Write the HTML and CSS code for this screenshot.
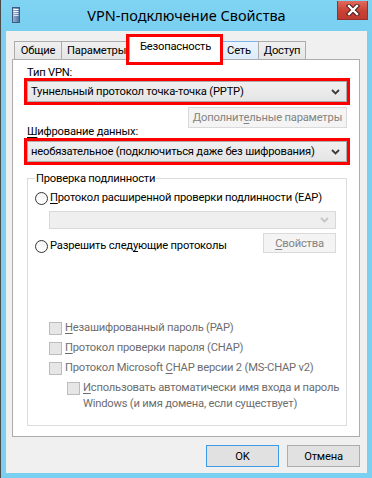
FILE: index.html
```html
<!DOCTYPE html>
<html lang="ru">
<head>
<meta charset="utf-8">
<title>VPN-подключение Свойства</title>
<link rel="stylesheet" href="styles.css">
</head>
<body>
<div class="window">
  <div class="titlebar">
    <div class="app-icon">
      <svg width="8" height="16" viewBox="0 0 8 16">
        <defs><linearGradient id="ig" x1="0" x2="1"><stop offset="0" stop-color="#9fb8d6"/><stop offset="1" stop-color="#4f6f9a"/></linearGradient></defs>
        <rect x="0.5" y="0.5" width="7" height="15" fill="url(#ig)" stroke="#3f5a80" stroke-width="1"/>
        <rect x="1.5" y="2" width="5" height="1" fill="#ffffff"/>
        <rect x="1.5" y="4" width="5" height="1" fill="#ffffff"/>
        <rect x="1.5" y="6" width="5" height="1" fill="#e8eef6"/>
        <rect x="1.5" y="8" width="5" height="1" fill="#dfe7f1"/>
      </svg>
    </div>
    <div class="title">VPN-подключение Свойства</div>
    <div class="close-wrap">
      <div class="close">
        <svg width="14" height="12" viewBox="0 0 14 12">
          <path d="M3 2 L11 10 M11 2 L3 10" stroke="#4a1a16" stroke-width="4.4" stroke-linecap="square"/>
          <path d="M3 2 L11 10 M11 2 L3 10" stroke="#ffffff" stroke-width="2.4" stroke-linecap="square"/>
        </svg>
      </div>
    </div>
  </div>

  <div class="client">
    <div class="tabs">
      <div class="tab tab-general">Общие</div>
      <div class="tab tab-params">Параметры</div>
      <div class="tab tab-active">Безопасность<span class="mark"></span></div>
      <div class="tab tab-hover">Сеть</div>
      <div class="tab tab-access">Доступ</div>
    </div>

    <div class="panel">
      <div class="label label-first"><u>Т</u>ип VPN:</div>
      <div class="combo marked">
        <span class="combo-text">Туннельный протокол точка-точка (PPTP)</span>
        <svg class="chev" width="9" height="6" viewBox="0 0 9 6"><path d="M1 1 L4.5 4.5 L8 1" fill="none" stroke="#3c3c3c" stroke-width="1.8"/></svg>
      </div>
      <div class="row-right">
        <div class="btn btn-disabled btn-extra">Дополнит<u>е</u>льные параметры</div>
      </div>
      <div class="label label-second"><u>Ш</u>ифрование данных:</div>
      <div class="combo marked">
        <span class="combo-text">необязательное (подключиться даже без шифрования)</span>
        <svg class="chev" width="9" height="6" viewBox="0 0 9 6"><path d="M1 1 L4.5 4.5 L8 1" fill="none" stroke="#3c3c3c" stroke-width="1.8"/></svg>
      </div>

      <fieldset class="group">
        <legend>Проверка подлинности</legend>
        <div class="radio-row">
          <span class="radio"></span>
          <span class="radio-text"><u>П</u>ротокол расширенной проверки подлинности (EAP)</span>
        </div>
        <div class="combo combo-disabled">
          <span class="combo-text"></span>
          <svg class="chev" width="9" height="6" viewBox="0 0 9 6"><path d="M1 1 L4.5 4.5 L8 1" fill="none" stroke="#c4c4c4" stroke-width="1.8"/></svg>
        </div>
        <div class="radio-row radio-row2">
          <span class="radio"></span>
          <span class="radio-text">Разрешить след<u>у</u>ющие протоколы</span>
          <div class="btn btn-disabled btn-props"><u>С</u>войства</div>
        </div>

        <div class="checks">
          <div class="check-row">
            <span class="checkbox"></span>
            <span class="check-text"><u>Н</u>езашифрованный пароль (PAP)</span>
          </div>
          <div class="check-row">
            <span class="checkbox"></span>
            <span class="check-text"><u>П</u>ротокол проверки пароля (CHAP)</span>
          </div>
          <div class="check-row">
            <span class="checkbox"></span>
            <span class="check-text">Протокол Microsoft <u>C</u>HAP версии 2 (MS-CHAP v2)</span>
          </div>
          <div class="check-row check-sub">
            <span class="checkbox"></span>
            <span class="check-text"><u>И</u>спользовать автоматически имя входа и пароль<br>Windows (и имя домена, если существует)</span>
          </div>
        </div>
      </fieldset>
    </div>

    <div class="footer">
      <div class="btn btn-default">OK</div>
      <div class="btn">Отмена</div>
    </div>
  </div>
</div>
</body>
</html>
```

FILE: styles.css
```css
* { box-sizing: border-box; }

html, body {
  margin: 0;
  padding: 0;
  background: #7ad0f1;
}

body {
  font-family: Roboto, "Noto Sans", sans-serif;
  font-size: 11.2px;
  letter-spacing: -0.2px;
  color: #000;
}

u { text-decoration: underline; text-underline-offset: 2px; }

.window {
  width: 372px;
  height: 478px;
  background: #7ad0f1;
  border-left: 1px solid #4a4a4a;
  display: flex;
  flex-direction: column;
}

/* Title bar */
.titlebar {
  height: 31px;
  flex: none;
  display: grid;
  grid-template-columns: 1fr auto 1fr;
  align-items: start;
  background: linear-gradient(180deg, #7fd3f3 0%, #7ad0f1 100%);
}

.app-icon {
  padding: 7px 0 0 11px;
  line-height: 0;
}

.title {
  font-family: "Noto Sans", "Open Sans", sans-serif;
  font-size: 14.5px;
  letter-spacing: 0;
  line-height: 20px;
  padding-top: 5px;
  color: #000;
  white-space: nowrap;
}

.close-wrap {
  justify-self: end;
  padding: 1px 4px 0 0;
}

.close {
  width: 31px;
  height: 19px;
  background: linear-gradient(180deg, #e06a5d 0%, #c94236 55%, #c13a2f 100%);
  border: 1px solid #9a3128;
  border-top: none;
  display: flex;
  align-items: center;
  justify-content: center;
}

/* Client area */
.client {
  flex: 1;
  margin: 0 5px 5px 5px;
  background: #f0f0f0;
  display: flex;
  flex-direction: column;
  padding: 4px 7px 6px 6px;
}

/* Tabs */
.tabs {
  display: flex;
  align-items: flex-end;
  height: 24px;
  padding-left: 2px;
  position: relative;
  z-index: 2;
}

.tab {
  height: 18px;
  border: 1px solid #acacac;
  border-bottom: none;
  background: linear-gradient(180deg, #f0f0f0 0%, #e5e5e5 100%);
  text-align: center;
  line-height: 17px;
  white-space: nowrap;
  overflow: hidden;
  color: #000;
}

.tab-general { width: 48px; }
.tab-params { width: 71px; margin-left: -1px; text-align: left; padding-left: 5px; }
.tab-active {
  width: 93px;
  height: 25px;
  margin: 0 -3px -1px -3px;
  background: #fff;
  position: relative;
  overflow: visible;
  z-index: 3;
  line-height: 22px;
}
.tab-hover {
  width: 40px;
  background: linear-gradient(180deg, #ecf4fc 0%, #dcecfc 100%);
  border-color: #7eb4ea;
}
.tab-access { width: 48px; margin-left: -1px; }

.mark {
  position: absolute;
  top: -2px;
  left: -4px;
  right: -2px;
  bottom: -5px;
  border: 3px solid #ff0000;
}

/* Panel */
.panel {
  flex: 1;
  background: #fff;
  border: 1px solid #adadad;
  padding: 5px 12px 9px 14px;
  display: flex;
  flex-direction: column;
  position: relative;
  z-index: 1;
}

.label {
  line-height: 16px;
  height: 16px;
}
.label-second { margin-top: -4px; }

.combo {
  height: 21px;
  border: 1px solid #acacac;
  background: linear-gradient(180deg, #f0f0f0 0%, #e5e5e5 100%);
  display: flex;
  align-items: center;
  padding: 0 6px 0 3px;
}
.combo.marked {
  outline: 3px solid #ff0000;
  outline-offset: 0;
}
.label-second + .combo { margin-top: 1px; }

.combo-text {
  flex: 1;
  white-space: nowrap;
  line-height: 16px;
}
.chev { flex: none; }

.combo-disabled {
  height: 18px;
  margin: 5px 0 0 14px;
  background: #efefef;
  border-color: #d9d9d9;
}

.row-right {
  display: flex;
  justify-content: flex-end;
  margin-top: 5px;
  height: 21px;
}

.btn {
  height: 22px;
  width: 73px;
  border: 1px solid #adadad;
  background: #e1e1e1;
  display: flex;
  align-items: center;
  justify-content: center;
  white-space: nowrap;
  color: #000;
}
.btn-disabled {
  background: #f4f4f4;
  border-color: #dadada;
  color: #838383;
}
.btn-extra { width: 159px; height: 21px; }
.btn-props { height: 20px; margin-left: auto; }
.btn-default { border-color: #3c9be6; }

/* Group box */
.group {
  margin: 9px 0 0 0;
  border: 1px solid #dcdcdc;
  padding: 0 10px 13px 7px;
  min-width: 0;
}
.group legend {
  padding: 0 1px;
  line-height: 15px;
}

.radio-row {
  display: flex;
  align-items: center;
  height: 16px;
  margin-top: 4px;
}
.radio {
  width: 13px;
  height: 13px;
  border: 1px solid #333;
  border-radius: 50%;
  background: linear-gradient(180deg, #f4f4f4, #ffffff);
  flex: none;
  margin-right: 2px;
}
.radio-text { white-space: nowrap; line-height: 16px; }

.radio-row2 {
  height: 20px;
  margin-top: 4px;
  align-items: flex-start;
}
.radio-row2 .radio { margin-top: 7px; }
.radio-row2 .radio-text { margin-top: 5px; }

.checks {
  margin-top: 67px;
  margin-left: 14px;
  display: flex;
  flex-direction: column;
  gap: 4px;
}
.check-row {
  display: flex;
  align-items: flex-start;
  color: #6d6d6d;
  line-height: 16px;
}
.checkbox {
  width: 13px;
  height: 13px;
  border: 1px solid #bcbcbc;
  background: #e6e6e6;
  flex: none;
  margin: 2px 3px 0 0;
}
.check-text { white-space: nowrap; }
.check-sub { margin-left: 18px; }

/* Footer */
.footer {
  display: flex;
  justify-content: flex-end;
  gap: 8px;
  margin-top: 8px;
}
```
